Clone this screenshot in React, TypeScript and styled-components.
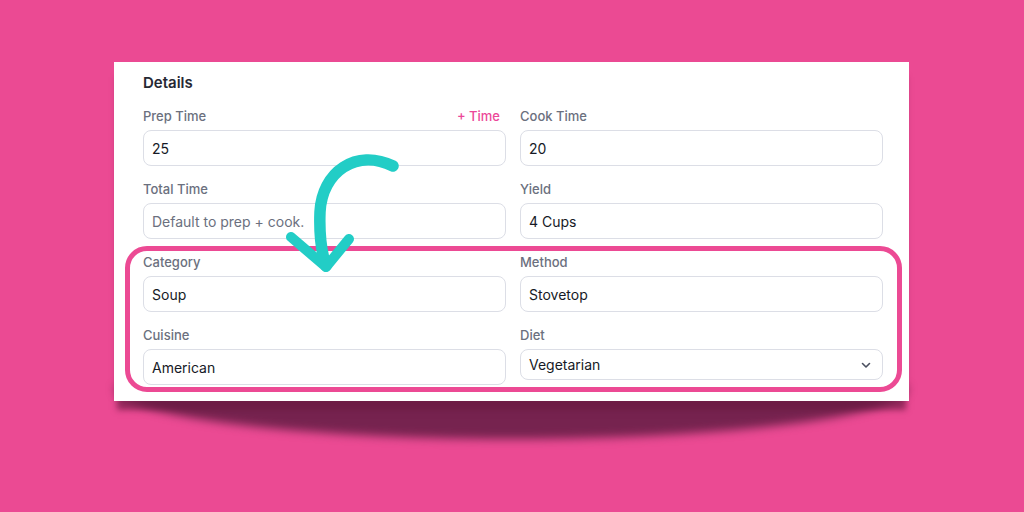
import styled, { createGlobalStyle } from "styled-components";

const GlobalStyle = createGlobalStyle`
    html {
        background: #eb4a93;
    }
    html, body {
        margin: 0;
        padding: 0;
    }
    body {
        font-family: Inter, "Noto Sans", "Liberation Sans", sans-serif;
        -webkit-font-smoothing: antialiased;
    }
`;

const Page = styled.div`
    position: relative;
    width: 1024px;
    height: 512px;
    overflow: hidden;
    padding: 62px 0 0 114px;
    box-sizing: border-box;
`;

const Card = styled.div`
    position: relative;
    width: 795px;
    box-sizing: border-box;
    padding: 11px 26px 16px 29px;
    background: #ffffff;
    box-shadow: 0 12px 6px -3px rgba(105, 25, 65, 0.65);

    &::after {
        content: "";
        position: absolute;
        left: 1px;
        right: 1px;
        top: calc(100% - 14px);
        height: 52px;
        background: #76234f;
        border-radius: 0 0 50% 50% / 0 0 100% 100%;
        filter: blur(5px);
        z-index: -1;
    }
`;

const Title = styled.div`
    font-size: 15px;
    line-height: 20px;
    font-weight: 600;
    color: #262833;
    margin-bottom: 15px;
`;

const Grid = styled.div`
    display: grid;
    grid-template-columns: 363px 363px;
    column-gap: 14px;
    row-gap: 15px;
`;

const Field = styled.div`
    display: flex;
    flex-direction: column;
`;

const LabelRow = styled.div`
    display: flex;
    justify-content: space-between;
    align-items: center;
    height: 16px;
    margin-bottom: 6px;
`;

const Label = styled.span<{ $accent?: boolean }>`
    font-size: 13px;
    line-height: 16px;
    font-weight: 500;
    color: ${(p) => (p.$accent ? "#ec4899" : "#6b707e")};
    padding-right: ${(p) => (p.$accent ? "6px" : "0")};
`;

const TextBox = styled.div<{ $placeholder?: boolean }>`
    height: 36px;
    box-sizing: border-box;
    border: 1px solid #dcdee6;
    border-radius: 8px;
    padding: 0 8px;
    display: flex;
    align-items: center;
    font-size: 14px;
    color: ${(p) => (p.$placeholder ? "#6b707e" : "#161a26")};
    background: #ffffff;
`;

const SelectBox = styled(TextBox)`
    height: 31px;
    justify-content: space-between;
    padding-right: 10px;
`;

const Highlight = styled.div`
    position: absolute;
    left: 11px;
    top: 184px;
    width: 777px;
    height: 146px;
    box-sizing: border-box;
    border: 5px solid #ec4a94;
    border-radius: 22px;
    pointer-events: none;
`;

const ArrowLayer = styled.svg`
    position: absolute;
    left: 0;
    top: 0;
    width: 1024px;
    height: 512px;
    pointer-events: none;
`;

type FieldData = {
    label: string;
    value: string;
    placeholder?: boolean;
    extra?: string;
    select?: boolean;
};

const fields: FieldData[] = [
    { label: "Prep Time", value: "25", extra: "+ Time" },
    { label: "Cook Time", value: "20" },
    { label: "Total Time", value: "Default to prep + cook.", placeholder: true },
    { label: "Yield", value: "4 Cups" },
    { label: "Category", value: "Soup" },
    { label: "Method", value: "Stovetop" },
    { label: "Cuisine", value: "American" },
    { label: "Diet", value: "Vegetarian", select: true },
];

function Chevron() {
    return (
        <svg width="12" height="12" viewBox="0 0 12 12" fill="none">
            <path
                d="M2.5 4.5 L6 8 L9.5 4.5"
                stroke="#4b5060"
                strokeWidth="1.6"
                strokeLinecap="round"
                strokeLinejoin="round"
            />
        </svg>
    );
}

export default function App() {
    return (
        <>
            <GlobalStyle />
            <Page>
                <Card>
                    <Title>Details</Title>
                    <Grid>
                        {fields.map((f) => (
                            <Field key={f.label}>
                                <LabelRow>
                                    <Label>{f.label}</Label>
                                    {f.extra && <Label $accent>{f.extra}</Label>}
                                </LabelRow>
                                {f.select ? (
                                    <SelectBox>
                                        {f.value}
                                        <Chevron />
                                    </SelectBox>
                                ) : (
                                    <TextBox $placeholder={f.placeholder}>{f.value}</TextBox>
                                )}
                            </Field>
                        ))}
                    </Grid>
                    <Highlight />
                </Card>
                <ArrowLayer viewBox="0 0 1024 512">
                    <path
                        d="M393 166 C356 148, 322 172, 320 212 C319 238, 322 254, 326 266"
                        stroke="#22cdc6"
                        strokeWidth="11.5"
                        strokeLinecap="round"
                        fill="none"
                    />
                    <path
                        d="M291 237 L326 267 L349 239"
                        stroke="#22cdc6"
                        strokeWidth="10"
                        strokeLinecap="round"
                        strokeLinejoin="round"
                        fill="none"
                    />
                </ArrowLayer>
            </Page>
        </>
    );
}
